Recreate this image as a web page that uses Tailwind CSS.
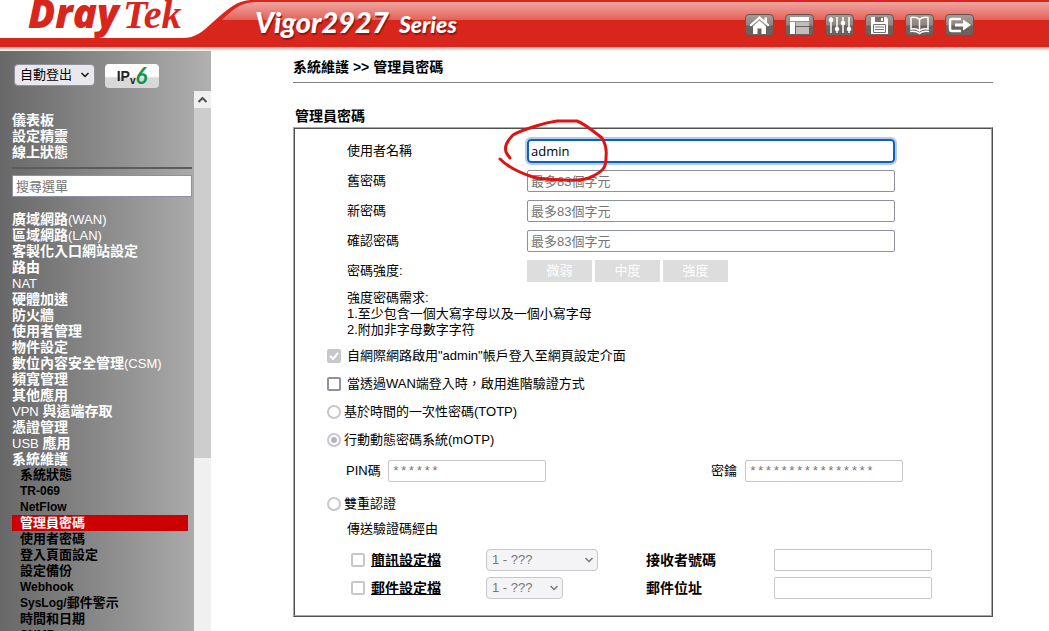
<!DOCTYPE html>
<html lang="zh-TW">
<head>
  <meta charset="UTF-8" />
  <meta name="viewport" content="width=device-width, initial-scale=1.0" />
  <title>Vigor2927 Series - 管理員密碼</title>
  <script src="https://cdn.jsdelivr.net/npm/@tailwindcss/browser@4"></script>
</head>
<body class="h-screen flex flex-col overflow-hidden bg-white text-black font-['Liberation_Sans','Noto_Sans_CJK_TC',sans-serif] text-[13px] leading-4">
  <!-- Header -->
  <header class="relative h-[51px] shrink-0 bg-linear-to-b from-[#b3a09e] from-92% to-white">
    <div class="absolute inset-x-0 top-0 h-[47px] bg-[#d9261c]">
      <div class="mt-[2px] h-[18px] bg-linear-to-b from-[#f0a5a0] to-[#e2605a]"></div>
      <div class="absolute inset-x-0 top-0 h-[2px] bg-[#d9261c]"></div>
    </div>
    <svg class="absolute left-0 top-0" width="260" height="47" viewBox="0 0 260 47" aria-hidden="true">
      <path d="M0 0H260V2C240 2 234 9 222 20L212 47H0Z" fill="#d9261c" />
      <path d="M0 0H250C236 1 229 8 213 22C202 32 196 38 182 38H0Z" fill="#fff" />
    </svg>
    <div class="relative flex h-[47px] items-start">
      <div class="flex w-[227px] shrink-0 items-baseline pl-7 text-[#d9261c] leading-[26px]">
        <span class="font-['Open_Sans'] text-[40px] font-extrabold italic">Dray</span>
        <span class="ml-1 font-['Liberation_Serif'] text-[40px] font-bold italic">Tek</span>
      </div>
      <h1 class="ml-7 mt-[6px] font-['Lato'] text-[29px] leading-8 font-black italic text-white text-shadow-[1px_2px_1px_#8a1812]">Vigor2927 <span class="ml-1 text-[23px]">Series</span></h1>
      <nav class="ml-auto mr-[75px] mt-[14px] flex gap-[11px]">
        <button aria-label="首頁" class="h-[22px] w-[29px] rounded-sm border border-[#6a534f] bg-linear-to-b from-[#a09791] from-10% via-[#8d8580] via-50% to-[#6b625e] to-55%">
          <svg width="27" height="20" viewBox="0 0 27 20"><path d="M13.500 1L3.500 10L5 11.500L13.500 4L22 11.500L23.500 10L21 7.700V2.500H18.500V5.500Z" fill="#fff" /><path d="M13.500 5.500L7 11.300V19H11.500V13.500H15.500V19H20V11.300Z" fill="#fff" /></svg>
        </button>
        <button aria-label="版面" class="h-[22px] w-[29px] rounded-sm border border-[#6a534f] bg-linear-to-b from-[#a09791] from-10% via-[#8d8580] via-50% to-[#6b625e] to-55%">
          <svg width="27" height="20" viewBox="0 0 27 20"><path d="M4 2H23V6H4ZM4 7H9V19H4Z" fill="#fff" /><path d="M10 7H23V11H10ZM10 12H23V19H10Z" fill="#c2bdba" /></svg>
        </button>
        <button aria-label="設定" class="h-[22px] w-[29px] rounded-sm border border-[#6a534f] bg-linear-to-b from-[#a09791] from-10% via-[#8d8580] via-50% to-[#6b625e] to-55%">
          <svg width="27" height="20" viewBox="0 0 27 20"><path d="M5 2V18M11 2V18M17 2V18M23 2V18" stroke="#fff" stroke-width="1.500" /><g fill="#fff"><circle cx="5" cy="5" r="2.300" /><circle cx="11" cy="14" r="2.300" /><circle cx="17" cy="8" r="2.300" /><circle cx="23" cy="14" r="2.300" /></g></svg>
        </button>
        <button aria-label="儲存" class="h-[22px] w-[29px] rounded-sm border border-[#6a534f] bg-linear-to-b from-[#a09791] from-10% via-[#8d8580] via-50% to-[#6b625e] to-55%">
          <svg width="27" height="20" viewBox="0 0 27 20"><path d="M5 2H20L22 4V19H5Z" fill="#fff" /><path d="M9 2H18V7H9Z" fill="#77706b" /><path d="M15 3H17V6H15Z" fill="#fff" /><path d="M7.500 9.500H19.500V17.500H7.500ZM9 12H18M9 14.500H18" fill="none" stroke="#77706b" /></svg>
        </button>
        <button aria-label="手冊" class="h-[22px] w-[29px] rounded-sm border border-[#6a534f] bg-linear-to-b from-[#a09791] from-10% via-[#8d8580] via-50% to-[#6b625e] to-55%">
          <svg width="27" height="20" viewBox="0 0 27 20" fill="none" stroke="#fff" stroke-width="1.500"><path d="M13.500 4.500C11 2 8 2 5 2.500V14C8 13.500 11 13.500 13.500 16C16 13.500 19 13.500 22 14V2.500C19 2 16 2 13.500 4.500ZM13.500 4.500V16M4 16.500C8 16 11 16.500 13.500 18.500C16 16.500 19 16 23 16.500" /></svg>
        </button>
        <button aria-label="登出" class="h-[22px] w-[29px] rounded-sm border border-[#6a534f] bg-linear-to-b from-[#a09791] from-10% via-[#8d8580] via-50% to-[#6b625e] to-55%">
          <svg width="27" height="20" viewBox="0 0 27 20"><path d="M15 4H6Q4 4 4 6V14Q4 16 6 16H15" fill="none" stroke="#fff" stroke-width="2.500" /><path d="M9 8.500H17V4.500L25 10L17 15.500V11.500H9Z" fill="#fff" /></svg>
        </button>
      </nav>
    </div>
  </header>

  <div class="flex min-h-0 flex-1">
    <!-- Sidebar -->
    <aside class="flex w-[211px] shrink-0 flex-col bg-linear-to-r from-[#686868] to-[#b0b0b0]">
      <div class="flex h-10 shrink-0 items-start gap-[10px] pl-[14px] pt-[13px]">
        <div class="relative">
          <select aria-label="自動登出" class="h-[22px] w-[81px] appearance-none rounded border border-[#8f8f9d] bg-[#e9e9ed] pl-[5px] text-[13px] leading-4">
            <option>自動登出</option>
          </select>
          <svg class="pointer-events-none absolute right-[6px] top-2" width="8" height="6" viewBox="0 0 8 6" fill="none" stroke="#111" stroke-width="1.500"><path d="M0.500 1L4 4.500L7.500 1" /></svg>
        </div>
        <button aria-label="IPv6" class="flex h-6 w-[54px] items-center justify-center rounded bg-linear-to-b from-white from-50% to-[#d8d8d8] to-60% leading-none">
          <span class="text-[14px] font-bold text-[#222]">IP</span><span class="mt-[10px] text-[10px] font-bold text-[#222]">v</span><span class="font-['Lato'] text-[22px] font-bold italic text-[#0f9444]">6</span>
        </button>
      </div>
      <div class="flex min-h-0 flex-1">
        <nav class="min-w-0 flex-1 overflow-hidden pl-3 pt-[21px] text-[14px] font-bold text-white">
          <ul>
            <li class="h-4"><a href="#">儀表板</a></li>
            <li class="h-4"><a href="#">設定精靈</a></li>
            <li class="h-4"><a href="#">線上狀態</a></li>
          </ul>
          <hr class="mr-[2px] mt-[7px] border-t-2 border-[#5c5c5c]" />
          <input type="text" aria-label="搜尋選單" placeholder="搜尋選單" class="mb-[14px] mt-[6px] block h-[22px] w-[180px] border border-[#8f8f9d] bg-white px-[3px] text-[13px] font-normal text-black placeholder:text-[#757575]" />
          <ul>
            <li class="h-4"><a href="#">廣域網路<span class="text-[13px] font-normal">(WAN)</span></a></li>
            <li class="h-4"><a href="#">區域網路<span class="text-[13px] font-normal">(LAN)</span></a></li>
            <li class="h-4"><a href="#">客製化入口網站設定</a></li>
            <li class="h-4"><a href="#">路由</a></li>
            <li class="h-4"><a href="#"><span class="text-[13px] font-normal">NAT</span></a></li>
            <li class="h-4"><a href="#">硬體加速</a></li>
            <li class="h-4"><a href="#">防火牆</a></li>
            <li class="h-4"><a href="#">使用者管理</a></li>
            <li class="h-4"><a href="#">物件設定</a></li>
            <li class="h-4"><a href="#">數位內容安全管理<span class="text-[13px] font-normal">(CSM)</span></a></li>
            <li class="h-4"><a href="#">頻寬管理</a></li>
            <li class="h-4"><a href="#">其他應用</a></li>
            <li class="h-4"><a href="#"><span class="text-[13px] font-normal">VPN</span> 與遠端存取</a></li>
            <li class="h-4"><a href="#">憑證管理</a></li>
            <li class="h-4"><a href="#"><span class="text-[13px] font-normal">USB</span> 應用</a></li>
            <li>
              <a href="#">系統維護</a>
              <ul class="mr-[6px] text-[13px] text-black">
                <li class="h-4 pl-2"><a href="#">系統狀態</a></li>
                <li class="h-4 pl-2"><a href="#"><span class="text-[12px]">TR-069</span></a></li>
                <li class="h-4 pl-2"><a href="#"><span class="text-[12px]">NetFlow</span></a></li>
                <li class="h-4 bg-[#cc0000] pl-2 text-white"><a href="#">管理員密碼</a></li>
                <li class="h-4 pl-2"><a href="#">使用者密碼</a></li>
                <li class="h-4 pl-2"><a href="#">登入頁面設定</a></li>
                <li class="h-4 pl-2"><a href="#">設定備份</a></li>
                <li class="h-4 pl-2"><a href="#"><span class="text-[12px]">Webhook</span></a></li>
                <li class="h-4 pl-2"><a href="#"><span class="text-[12px]">SysLog/</span>郵件警示</a></li>
                <li class="h-4 pl-2"><a href="#">時間和日期</a></li>
                <li class="h-4 pl-2"><a href="#"><span class="text-[12px]">SNMP</span></a></li>
              </ul>
            </li>
          </ul>
        </nav>
        <!-- Scrollbar -->
        <div class="flex w-[17px] shrink-0 flex-col bg-[#f0f0f0]">
          <div class="flex h-[17px] shrink-0 items-center justify-center">
            <svg width="9" height="6" viewBox="0 0 9 6" fill="none" stroke="#505050" stroke-width="2"><path d="M0.500 5L4.500 1L8.500 5" /></svg>
          </div>
          <div class="min-h-0 flex-1"><div class="h-[67%] bg-[#cdcdcd]"></div></div>
        </div>
      </div>
    </aside>

    <!-- Content -->
    <main class="relative min-w-0 flex-1 overflow-hidden pl-[82px] pr-14 pt-2">
      <h2 class="border-b border-[#808080] pb-[7px] text-[14px] font-bold">系統維護 &gt;&gt; 管理員密碼</h2>
      <h3 class="ml-[2px] mt-[25px] text-[14px] font-bold">管理員密碼</h3>

      <div class="mt-[3px] border border-[#a8a8a8] border-b-[#505050] border-r-[#505050]">
        <form class="border border-[#505050] border-b-[#a8a8a8] border-r-[#a8a8a8] pb-[13px] pt-[7px]">
          <div class="grid auto-rows-[30px] grid-cols-[180px_1fr] items-center pl-[52px] pr-24">
            <label for="user">使用者名稱</label>
            <input id="user" type="text" value="admin" class="h-6 w-full rounded-sm border-2 border-[#0f5fc0] px-[2px] font-['Open_Sans'] text-[13px] outline-2 outline-[#b3cbef]" />
            <label for="oldpw">舊密碼</label>
            <input id="oldpw" type="text" placeholder="最多83個字元" class="h-[22px] w-full rounded-xs border border-[#8f8f9d] px-[3px] text-[13px] placeholder:text-[#757575]" />
            <label for="newpw">新密碼</label>
            <input id="newpw" type="text" placeholder="最多83個字元" class="h-[22px] w-full rounded-xs border border-[#8f8f9d] px-[3px] text-[13px] placeholder:text-[#757575]" />
            <label for="confirmpw">確認密碼</label>
            <input id="confirmpw" type="text" placeholder="最多83個字元" class="h-[22px] w-full rounded-xs border border-[#8f8f9d] px-[3px] text-[13px] placeholder:text-[#757575]" />
            <span>密碼強度:</span>
            <div class="flex gap-[3px] text-center leading-[22px] text-white">
              <span class="w-[65px] bg-[#dddddd]">微弱</span>
              <span class="w-[65px] bg-[#dddddd]">中度</span>
              <span class="w-[65px] bg-[#dddddd]">強度</span>
            </div>
          </div>

          <div class="my-1 pl-[52px]">
            <p>強度密碼需求:</p>
            <p>1.至少包含一個大寫字母以及一個小寫字母</p>
            <p>2.附加非字母數字字符</p>
          </div>

          <div class="pl-8">
            <div class="flex h-7 items-center">
              <div class="relative mr-[6px] h-[14px] w-[14px]">
                <input id="inet" type="checkbox" checked disabled class="block h-[14px] w-[14px] appearance-none rounded-xs bg-[#c7c7cc]" />
                <svg class="pointer-events-none absolute inset-0" width="14" height="14" viewBox="0 0 14 14" fill="none" stroke="#fff" stroke-width="2"><path d="M3 7L6 10L11 4" /></svg>
              </div>
              <label for="inet">自網際網路啟用"admin"帳戶登入至網頁設定介面</label>
            </div>
            <div class="flex h-7 items-center">
              <input id="wan" type="checkbox" class="mr-[6px] h-[14px] w-[14px] appearance-none rounded-xs border-2 border-[#8f8f9d]" />
              <label for="wan">當透過WAN端登入時，啟用進階驗證方式</label>
            </div>
            <div class="flex h-7 items-center">
              <input id="totp" type="radio" name="auth" disabled class="mr-[3px] h-[14px] w-[14px] appearance-none rounded-full border-2 border-[#c7c7cc]" />
              <label for="totp">基於時間的一次性密碼(TOTP)</label>
            </div>
            <div class="flex h-7 items-center">
              <input id="motp" type="radio" name="auth" checked disabled class="mr-[3px] h-[14px] w-[14px] appearance-none rounded-full border-2 border-[#c7c7cc] bg-[#b4b4ba] bg-clip-content p-[2px]" />
              <label for="motp">行動動態密碼系統(mOTP)</label>
            </div>
          </div>

          <div class="flex h-[34px] items-center pl-[51px]">
            <label for="pin" class="w-[42px]">PIN碼</label>
            <input id="pin" type="text" value="******" disabled class="h-[22px] w-[158px] rounded-xs border border-[#c7c7cc] px-[3px] font-['Liberation_Mono'] text-[13px] text-[#777]" />
            <label for="secret" class="ml-[165px] w-[34px]">密鑰</label>
            <input id="secret" type="text" value="****************" disabled class="h-[22px] w-[158px] rounded-xs border border-[#c7c7cc] px-[3px] font-['Liberation_Mono'] text-[13px] text-[#777]" />
          </div>

          <div class="flex h-8 items-center pl-8">
            <input id="twofa" type="radio" name="auth" disabled class="mr-[3px] h-[14px] w-[14px] appearance-none rounded-full border-2 border-[#c7c7cc]" />
            <label for="twofa">雙重認證</label>
          </div>
          <p class="mb-2 pl-[52px] leading-[18px]">傳送驗證碼經由</p>

          <div class="grid auto-rows-[28px] grid-cols-[20px_115px_160px_128px_158px] items-center pl-14 text-[14px] font-bold">
            <input type="checkbox" disabled aria-label="簡訊設定檔" class="h-[14px] w-[14px] appearance-none rounded-xs border-2 border-[#c7c7cc]" />
            <a href="#" class="underline">簡訊設定檔</a>
            <div class="relative w-[112px]">
              <select disabled aria-label="簡訊設定檔" class="block h-[22px] w-full appearance-none rounded border border-[#c7c7cc] bg-[#f4f4f6] pl-[5px] text-[13px] font-normal leading-4 text-[#777]"><option>1 - ???</option></select>
              <svg class="pointer-events-none absolute right-[5px] top-2" width="8" height="6" viewBox="0 0 8 6" fill="none" stroke="#777" stroke-width="1.500"><path d="M0.500 1L4 4.500L7.500 1" /></svg>
            </div>
            <label for="phone">接收者號碼</label>
            <input id="phone" type="text" disabled class="h-[22px] w-full rounded-xs border border-[#c7c7cc] px-1 text-[13px] font-normal" />

            <input type="checkbox" disabled aria-label="郵件設定檔" class="h-[14px] w-[14px] appearance-none rounded-xs border-2 border-[#c7c7cc]" />
            <a href="#" class="underline">郵件設定檔</a>
            <div class="relative w-[77px]">
              <select disabled aria-label="郵件設定檔" class="block h-[22px] w-full appearance-none rounded border border-[#c7c7cc] bg-[#f4f4f6] pl-[5px] text-[13px] font-normal leading-4 text-[#777]"><option>1 - ???</option></select>
              <svg class="pointer-events-none absolute right-[5px] top-2" width="8" height="6" viewBox="0 0 8 6" fill="none" stroke="#777" stroke-width="1.500"><path d="M0.500 1L4 4.500L7.500 1" /></svg>
            </div>
            <label for="mail">郵件位址</label>
            <input id="mail" type="text" disabled class="h-[22px] w-full rounded-xs border border-[#c7c7cc] px-1 text-[13px] font-normal" />
          </div>
        </form>
      </div>

      <!-- Hand-drawn mark around the user name -->
      <svg class="pointer-events-none absolute left-[284px] top-[64px]" width="116" height="70" viewBox="0 0 116 70" fill="none" stroke="#dd1414" stroke-width="3" stroke-linecap="round" stroke-linejoin="round" aria-hidden="true">
        <path d="M5 44C13 52 25 58 38 62C48 65 60 64 70 65C84 66 94 64 100 60C110 55 111 50 111 42C112 34 110 28 107 23C98 16 90 9 82 6H62C54 7 47 9 41 11C32 14 24 16 18 20C11 27 9 34 12 39L15 43" />
      </svg>
    </main>
  </div>
</body>
</html>
